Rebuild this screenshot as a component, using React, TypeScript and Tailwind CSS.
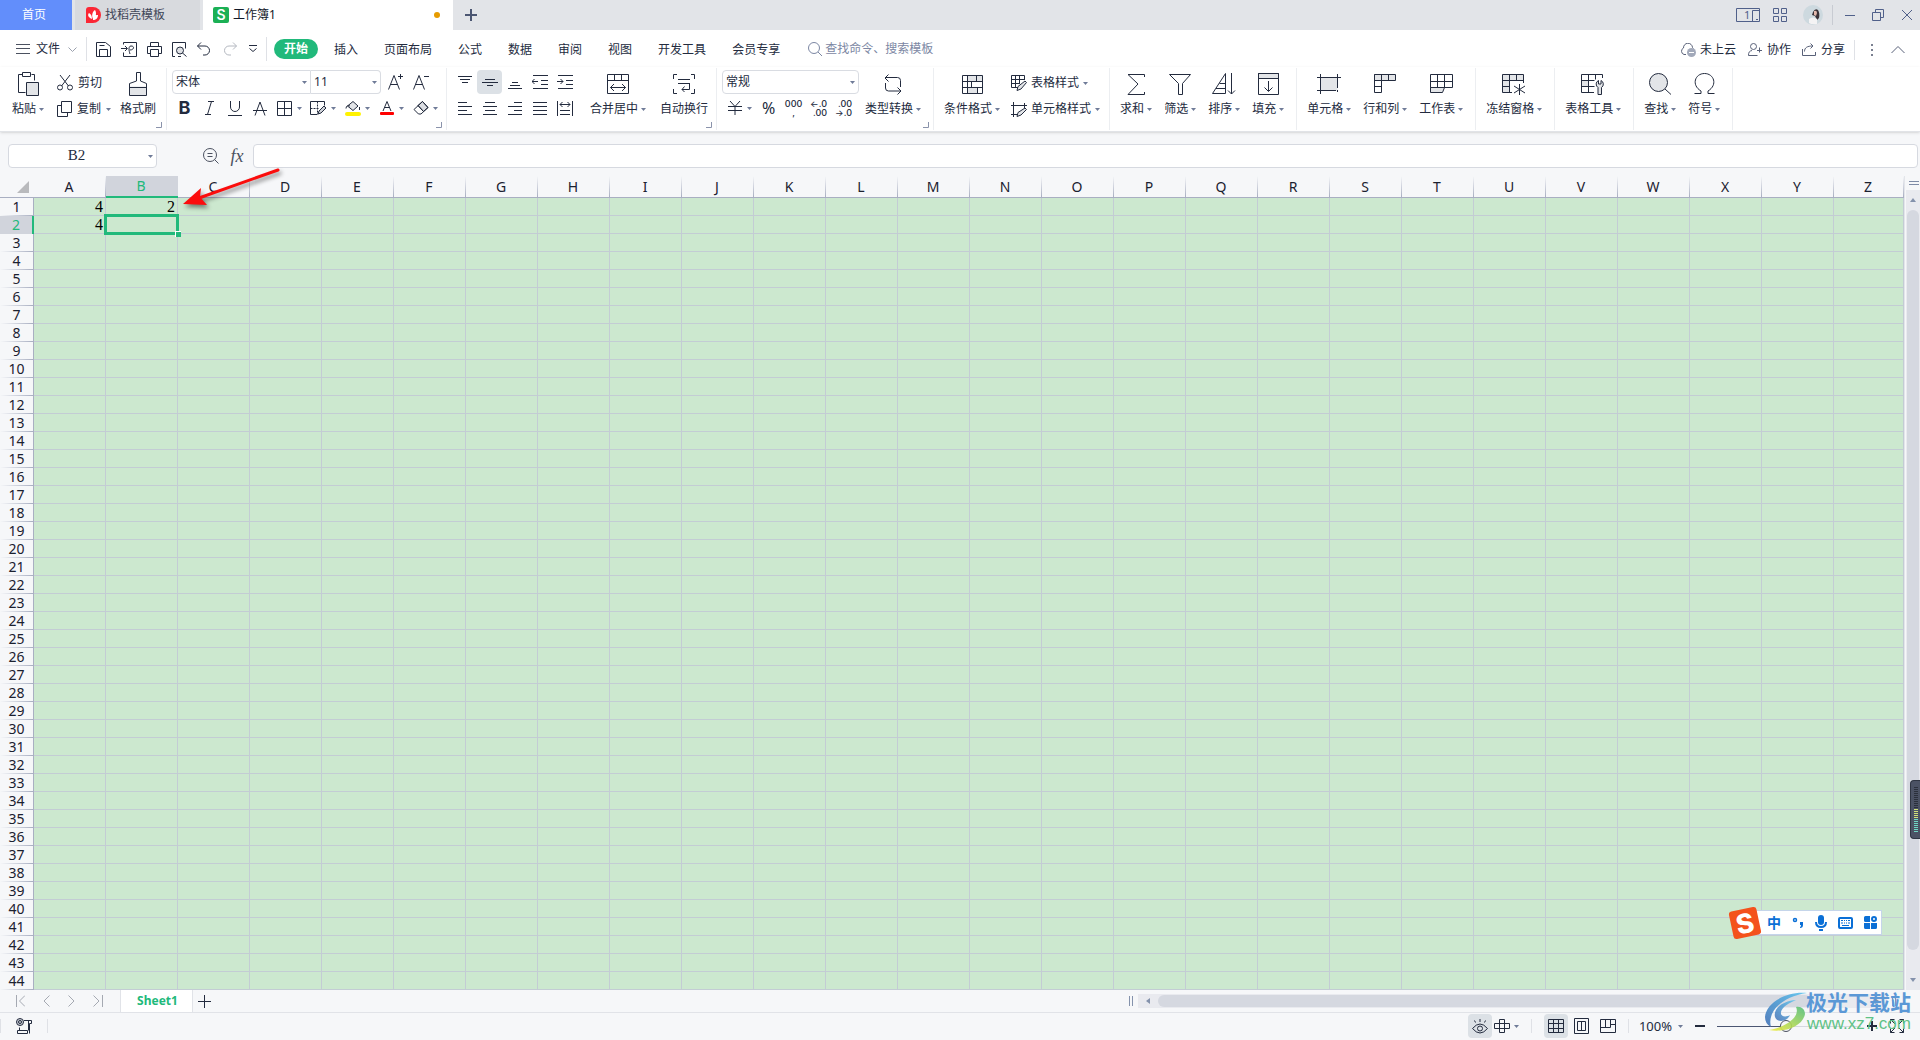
import type { ReactNode } from 'react'

const columns = 'ABCDEFGHIJKLMNOPQRSTUVWXYZ'.split('')
const rows = Array.from({ length: 44 }, (_, i) => i + 1)
const cells: Record<string, string> = { A1: '4', B1: '2', A2: '4' }
const menus = ['插入', '页面布局', '公式', '数据', '审阅', '视图', '开发工具', '会员专享']

function Svg({ w, h, children, className = '' }: { w: number; h: number; children: ReactNode; className?: string }) {
  return (
    <svg width={w} height={h} viewBox={`0 0 ${w} ${h}`} fill="none" stroke="currentColor" className={`shrink-0 ${className}`} aria-hidden="true">
      {children}
    </svg>
  )
}

function Caret() {
  return (
    <Svg w={5} h={3} className="text-[#6f7b98]">
      <path d="M0 0h5L2.500 3z" fill="currentColor" stroke="none" />
    </Svg>
  )
}

function Group({ children, launcher, className = 'gap-3 pl-[10px] pr-3' }: { children: ReactNode; launcher?: boolean; className?: string }) {
  return (
    <div className={`relative flex h-[62px] shrink-0 items-start border-r border-[#eceef1] pt-0.5 ${className}`}>
      {children}
      {launcher && (
        <button aria-label="更多设置" className="absolute right-1 bottom-0.5 text-[#8a93ab]">
          <Svg w={6} h={6}><path d="M5.500 0v5.500H0" /></Svg>
        </button>
      )}
    </div>
  )
}

function BigButton({ label, icon, caret = true }: { label: string; icon: ReactNode; caret?: boolean }) {
  return (
    <button className="flex shrink-0 flex-col items-center">
      <span className="flex h-7 items-center">{icon}</span>
      <span className="flex h-[22px] items-center gap-[3px]">
        {label}
        {caret && <Caret />}
      </span>
    </button>
  )
}

function Tool({ label, children, caret, active }: { label: string; children: ReactNode; caret?: boolean; active?: boolean }) {
  return (
    <button aria-label={label} title={label} className="flex h-6 items-center">
      <span className={`flex h-6 w-[25px] items-center justify-center rounded-sm ${active ? 'bg-[#dce1e6]' : ''}`}>{children}</span>
      {caret && <span className="w-[9px]"><Caret /></span>}
    </button>
  )
}

function Picker({ label, value, className }: { label: string; value: string; className: string }) {
  return (
    <span className={`relative flex h-6 items-center border border-[#d9dce2] bg-white ${className}`}>
      <select aria-label={label} className="h-full w-full appearance-none bg-transparent pl-[3px] outline-none">
        <option>{value}</option>
      </select>
      <span className="pointer-events-none absolute right-[3px]"><Caret /></span>
    </span>
  )
}

// Horizontal strokes for the alignment icons, each one as [x1, x2, y]
function Lines({ items, children }: { items: number[][]; children?: ReactNode }) {
  return (
    <Svg w={16} h={15}>
      {items.map(([a, b, y]) => <path key={`${a}-${y}`} d={`M${a} ${y + 0.5}H${b}`} />)}
      {children}
    </Svg>
  )
}

function TitleBar() {
  return (
    <header className="flex h-[30px] items-center bg-[#e2e4e8] text-[#3f4658]">
      <button className="h-full w-[72px] bg-[#628efb] pr-1 text-white">首页</button>
      <button className="ml-[3px] flex h-full w-[125px] items-center gap-1 bg-[#d8dade] pl-[11px]">
        <Svg w={15} h={16}>
          <path d="M0 3Q0 0 3 0h4a8 8 0 0 1 0 16H0z" fill="#fb2735" stroke="none" />
          <path d="M6 12C1 10 2 7 3 6c2 1 3 3 3 6zM7 12C5 8 7 4 9 3c2 3 1 7-2 9zM7 13c0-3 2-5 5-5 0 3-2 5-5 5z" fill="#fff" stroke="none" />
        </Svg>
        找稻壳模板
      </button>
      <button className="ml-[3px] flex h-full w-[250px] items-center gap-1 bg-white pl-[10px] text-[#111827]">
        <span className="flex size-4 items-center justify-center rounded-[2px] bg-[#1bb055] font-['Inter'] text-sm font-semibold text-white">S</span>
        工作簿1
        <span className="mr-[13px] ml-auto size-1.5 rounded-full bg-[#e69b00]" />
      </button>
      <button aria-label="新建标签" className="ml-3 text-[#4b5672]">
        <Svg w={12} h={12}><path d="M6 0v12M0 6h12" strokeWidth="2" /></Svg>
      </button>
      <div className="mr-2 ml-auto flex h-full items-center text-[#50608a]">
        <button aria-label="窗口布局" className="mr-[13px]">
          <Svg w={24} h={14}>
            <path d="M.5.5h23v13H.5zM16.500 13.500v-11h7M20 11.500h2" />
            <text x="8" y="11" fontSize="11" fill="currentColor" stroke="none">1</text>
          </Svg>
        </button>
        <button aria-label="应用" className="mr-4">
          <Svg w={14} h={14}><path d="M.5.5h5v5h-5zM8.500.5h5v5h-5zM.5 8.500h5v5h-5zM8.500 8.500h5v5h-5z" /></Svg>
        </button>
        <button aria-label="账户" className="mr-[9px]">
          <Svg w={20} h={20}>
            <circle cx="10" cy="10" r="10" fill="#cdd9df" stroke="none" />
            <path d="M10 7q2-4 5-2 2 3 1 8l-2 2-2-4-3-1z" fill="#3a3238" stroke="none" />
            <path d="M11 6q3-1 3 2l-1 3-2-1z" fill="#e3b9ad" stroke="none" />
            <path d="M6 14q4-3 8 0v5q-5 1-8-1z" fill="#f4f3f4" stroke="none" />
          </Svg>
        </button>
        <span className="mr-3 h-5 w-px bg-[#c8cbd2]" />
        <button aria-label="最小化" className="mr-[17px]"><Svg w={10} h={12}><path d="M0 6.500h10" /></Svg></button>
        <button aria-label="还原" className="mr-[18px]"><Svg w={12} h={12}><path d="M.5 3.500h8v8h-8zM3.500 3.500v-3h8v8h-3" /></Svg></button>
        <button aria-label="关闭"><Svg w={10} h={10}><path d="M0 0l10 10M10 0L0 10" /></Svg></button>
      </div>
    </header>
  )
}

function MenuBar() {
  return (
    <nav className="flex h-[37px] items-center pt-px">
      <button className="ml-4 flex items-center">
        <Svg w={14} h={10} className="mr-1.5 text-[#4b5160]"><path d="M0 .5h14M0 4.500h14M0 9.500h14" /></Svg>
        文件
        <Svg w={9} h={5} className="ml-2 text-[#9aa0ad]"><path d="M.5.5l4 4 4-4" /></Svg>
      </button>
      <span className="mr-[9px] ml-[9px] h-6 w-px bg-[#dfe1e6]" />
      <div className="flex items-center gap-2.5">
        <button aria-label="保存"><Svg w={15} h={15}><path d="M.5.5h9l5 4v10H.5zM3.500 14.500v-7h8v7M3.500 3.500h5" /></Svg></button>
        <button aria-label="输出为PDF"><Svg w={16} h={15}><path d="M2.500 2.500v-2h13v14h-13v-4M0 6.500h6M4 4l2.500 2.500L4 9M9 12c-1-3-2-8 1-8 4 0 3 4-1 4" /></Svg></button>
        <button aria-label="打印"><Svg w={15} h={15}><path d="M3.500 4.500v-4h8v4M3.500 11.500h-3v-7h14v7h-3M3.500 7.500h8v7h-8z" /></Svg></button>
        <button aria-label="打印预览"><Svg w={15} h={15}><path d="M3 14.500H.5V.5h13v6M6 14.500h3" /><circle cx="8" cy="8.500" r="3.500" fill="#dfe1e5" /><path d="M10.500 11l4 3.500" /></Svg></button>
        <button aria-label="撤销"><Svg w={14} h={14}><path d="M4 .5L.5 4 4 7.500M.5 4H8a4.500 4.500 0 0 1 0 9H6" /></Svg></button>
        <button aria-label="恢复" className="ml-0.5 text-[#b4b8c0]"><Svg w={14} h={14}><path d="M10 .5L13.500 4 10 7.500M13.500 4H6a4.500 4.500 0 0 0 0 9h2" /></Svg></button>
        <button aria-label="更多命令" className="ml-0.5"><Svg w={8} h={8}><path d="M0 .5h8M.5 3.500L4 6.500l3.500-3" /></Svg></button>
      </div>
      <span className="mr-[7px] ml-[9px] h-6 w-px bg-[#dfe1e6]" />
      <button className="h-5 w-11 rounded-full bg-[#21b97b] font-bold text-white">开始</button>
      <div className="ml-4 flex gap-[26px] pt-px">
        {menus.map((m) => <button key={m}>{m}</button>)}
      </div>
      <label className="ml-7 flex items-center gap-0.5 text-[#7c87a3]">
        <Svg w={15} h={15}><circle cx="6" cy="6" r="5.500" /><path d="M10 10l4 4" /></Svg>
        <input className="w-32 outline-none placeholder:text-[#7c87a3]" placeholder="查找命令、搜索模板" aria-label="查找命令" />
      </label>
      <div className="mr-[15px] ml-auto flex items-center pt-px">
        <button className="mr-3 flex items-center gap-1">
          <Svg w={16} h={14} className="text-[#596178]">
            <path d="M6 11.500H4a3.500 3.500 0 0 1-.5-6.500 4.500 4.500 0 0 1 9-.5l1 1" />
            <circle cx="11.500" cy="9.500" r="4.500" fill="#a2a9ba" stroke="none" />
            <path d="M9 9.500h5" stroke="#fff" />
          </Svg>
          未上云
        </button>
        <button className="mr-[11px] flex items-center gap-[5px]">
          <Svg w={14} h={13} className="text-[#596178]"><circle cx="5.500" cy="3.500" r="3" /><path d="M4 7.500C1.500 8 .5 9 .5 12.500h9M11.500 4.500v5M9 7.500h5" /></Svg>
          协作
        </button>
        <button className="flex items-center gap-[5px]">
          <Svg w={14} h={13} className="text-[#596178]"><path d="M.5 6v6.500h13V9M2.500 8.500c0-4 3-5.500 8-5.500M8.500.5L11 3 8.500 5.500" /></Svg>
          分享
        </button>
        <span className="mr-4 ml-[9px] h-5 w-px bg-[#dfe1e6]" />
        <button aria-label="更多"><Svg w={2} h={12} className="text-[#7a8090]"><path d="M1 0v2M1 5v2M1 10v2" strokeWidth="2" /></Svg></button>
        <button aria-label="收起功能区" className="ml-[18px] text-[#596178]"><Svg w={14} h={8}><path d="M.5 7L7 .5 13.500 7" /></Svg></button>
      </div>
    </nav>
  )
}

const smallText = "font-['Inter'] text-[9px] leading-[9px] font-medium"

function Ribbon() {
  return (
    <section aria-label="开始" className="flex h-[65px] items-start border-b border-[#e1e3e7] pt-px shadow-sm">
      <Group launcher className="pr-[10px] pl-3">
        <BigButton label="粘贴" icon={<Svg w={22} h={24}><path d="M5.500 2.500h-4v18h7M14.500 2.500h3v6M5.500.5h8v4h-8z" /><path d="M9.500 10.500h12v13h-12z" fill="#e3e5e8" /></Svg>} />
        <div className="mr-[7px] ml-[13px] flex w-14 flex-col gap-0.5 pt-px">
          <button className="flex h-6 items-center gap-[5px]">
            <Svg w={16} h={16}><path d="M3 0l8.500 11M13 0L4.500 11" /><circle cx="3" cy="12.500" r="2.500" /><circle cx="13" cy="12.500" r="2.500" /></Svg>
            剪切
          </button>
          <button className="flex h-6 items-center gap-[5px]">
            <Svg w={15} h={16}><path d="M4.500.5h10v11h-10zM4.500 4.500h-4v11h10v-4" /></Svg>
            <span className="shrink-0">复制</span>
            <Caret />
          </button>
        </div>
        <BigButton label="格式刷" caret={false} icon={<Svg w={18} h={24}><path d="M.5 14.500h17v9H.5z" fill="#e3e5e8" stroke="none" /><path d="M7.500 9V.5h4V9l6 2.500v12H.5v-12zM.5 15.500h17" /></Svg>} />
      </Group>

      <Group launcher className="w-[280px] pl-[5px]">
        <div className="flex flex-col gap-0.5">
          <div className="flex">
            <Picker label="字体" value="宋体" className="w-[139px] rounded-l-sm" />
            <Picker label="字号" value="11" className="mr-0.5 w-[70px] rounded-r-sm border-l-0" />
            <Tool label="增大字号"><Svg w={15} h={16}><path d="M.5 15.500L6 1.500l5.500 14M2.500 10.500h7M10 2.500h5M12.500 0v5" /></Svg></Tool>
            <Tool label="减小字号"><Svg w={16} h={16}><path d="M.5 15.500L6 1.500l5.500 14M2.500 10.500h7M11 2.500h5" /></Svg></Tool>
          </div>
          <div className="flex">
            <Tool label="加粗"><span className="font-['Inter'] text-lg font-bold">B</span></Tool>
            <Tool label="倾斜"><Svg w={9} h={14}><path d="M3 .5h6M0 13.500h6M6.500.5l-4 13" /></Svg></Tool>
            <Tool label="下划线"><Svg w={14} h={15}><path d="M2.500 0v6a4.500 4.500 0 0 0 9 0V0M0 14.500h14" /></Svg></Tool>
            <Tool label="删除线"><Svg w={14} h={15}><path d="M2 14.500L7 1l5 13.500M0 9.500h14" /></Svg></Tool>
            <Tool label="边框" caret><Svg w={15} h={15}><path d="M.5.5h14v14H.5zM7.500.5v14M.5 7.500h14" /></Svg></Tool>
            <Tool label="绘制边框" caret><Svg w={17} h={15}><path d="M7 13.500H.5V.5h14v4" /><path d="M.5 7.500h9M7.500.5v13" strokeDasharray="2 1" /><path d="M8 13l1-3 5-5 2 2-5 5z" fill="#cfd2d8" /></Svg></Tool>
            <Tool label="填充颜色" caret><Svg w={16} h={15}><path d="M2.500 5L8 .5l5 4.500L8 9.500z" fill="#e3e5e8" /><path d="M1 7.500C1 5 3 4 5 5M14.500 6v3" /><rect y="11" width="16" height="4" rx="2" fill="#fff200" stroke="none" /></Svg></Tool>
            <Tool label="字体颜色" caret><Svg w={14} h={15}><path d="M3 10L7 .5 11 10M4.500 6.500h5" /><rect y="11" width="14" height="3" rx="1" fill="#f00" stroke="none" /></Svg></Tool>
            <Tool label="清除" caret><Svg w={16} h={14}><path d="M5 4.500L9.500.5l5.500 6-4.500 4z" fill="#dcdee3" /><path d="M9.500.5l5.500 6-7 6.500H5.500L1 8.500zM5 4.500l5.500 6" /></Svg></Tool>
          </div>
        </div>
      </Group>

      <Group launcher className="pr-2 pl-[5px]">
        <div className="grid grid-cols-[repeat(5,25px)] gap-y-0.5">
          <Tool label="顶端对齐"><Lines items={[[1, 15, 1], [3, 13, 4], [5, 11, 7]]} /></Tool>
          <Tool label="垂直居中" active><Lines items={[[3, 13, 4], [0, 16, 7], [5, 11, 10]]} /></Tool>
          <Tool label="底端对齐"><Lines items={[[5, 11, 7], [3, 13, 10], [1, 15, 13]]} /></Tool>
          <Tool label="减少缩进"><Lines items={[[1, 16, 0], [9, 16, 5], [9, 16, 9], [1, 16, 13]]}><path d="M0 6.500h6M2.500 4L0 6.500 2.500 9" /></Lines></Tool>
          <Tool label="增加缩进"><Lines items={[[1, 16, 0], [9, 16, 5], [9, 16, 9], [1, 16, 13]]}><path d="M0 6.500h6M3.500 4L6 6.500 3.500 9" /></Lines></Tool>
          <Tool label="左对齐"><Lines items={[[1, 10, 1], [1, 15, 5], [1, 10, 9], [1, 15, 13]]} /></Tool>
          <Tool label="水平居中"><Lines items={[[3, 13, 1], [1, 15, 5], [3, 13, 9], [1, 15, 13]]} /></Tool>
          <Tool label="右对齐"><Lines items={[[7, 15, 1], [1, 15, 5], [7, 15, 9], [1, 15, 13]]} /></Tool>
          <Tool label="两端对齐"><Lines items={[[1, 15, 1], [1, 15, 5], [1, 15, 9], [1, 15, 13]]} /></Tool>
          <Tool label="分散对齐"><Lines items={[[3, 13, 9], [3, 13, 13]]}><path d="M.5 0v15M15.500 0v15M3 3.500h10M5.500 1L3 3.500 5.500 6M10.500 1L13 3.500 10.500 6" /></Lines></Tool>
        </div>
        <div className="ml-[13px] flex gap-3.5">
          <BigButton label="合并居中" icon={<Svg w={22} h={20}><path d="M.5.5h21v19H.5zM.5 6.500h21M7.500.5v6M14.500.5v6M3.500 13.500h15M7 10l-3.500 3.500L7 17M15 10l3.500 3.500L15 17" /></Svg>} />
          <BigButton label="自动换行" caret={false} icon={<Svg w={22} h={20}><path d="M4 .5H.5V5M18 .5h3.500V5M4 19.500H.5V15M18 19.500h3.500V15M5 5.500h12M5 9.500h12M16.500 9.500v6H9M11.500 12.500L9 15.500l2.500 2.500" /></Svg>} />
        </div>
      </Group>

      <Group launcher className="pr-3 pl-[5px]">
        <div className="mr-1.5 flex w-[137px] flex-col gap-0.5">
          <Picker label="数字格式" value="常规" className="rounded-sm" />
          <div className="flex">
            <Tool label="货币" caret><Svg w={14} h={14}><path d="M2 0l5 5.500L12 0M0 5.500h14M0 9.500h14M7 5.500V14" /></Svg></Tool>
            <Tool label="百分比"><span className="text-base">%</span></Tool>
            <Tool label="千位分隔"><span className={`${smallText} text-center`}>000<br />,</span></Tool>
            <Tool label="增加小数"><span className={`${smallText} text-right`}>←.0<br />.00</span></Tool>
            <Tool label="减少小数"><span className={`${smallText} text-right`}>.00<br />→.0</span></Tool>
          </div>
        </div>
        <BigButton label="类型转换" icon={<Svg w={18} h={21}><path d="M4.500.5L1 4l3.500 3.500M1 3.500h12.500q3 0 3 3V13M1.500 9v5q0 3 3 3H17M13.500 13.500L17 17l-3.500 3.500" /></Svg>} />
      </Group>

      <Group className="pr-[9px] pl-[10px]">
        <BigButton label="条件格式" icon={<Svg w={21} h={19}><path d="M6 1h14v5H6zM6 12h9v6H6z" fill="#e3e5e8" stroke="none" /><path d="M.5.5h20v18H.5zM.5 6.500h20M.5 12.500h20M5.500.5v18M14.500.5v6M9.500 6.500v6M15.500 12.500v6" /></Svg>} />
        <div className="ml-[11px] flex flex-col gap-0.5 pt-px">
          <button className="flex h-6 items-center">
            <Svg w={16} h={17} className="mr-1"><path d="M7 12.500H.5V.5h13V5M.5 4.500h13M.5 8.500H9M4.500.5v12M8.500.5V9" /><path d="M6 15.500l1-4 7-5.500 1.500 1.500L10 14z" fill="#e3e5e8" /></Svg>
            表格样式<span className="ml-1"><Caret /></span>
          </button>
          <button className="flex h-6 items-center">
            <Svg w={16} h={15} className="mr-1"><path d="M0 3.500h16M2.500 0v15M0 12.500h6M13.500 1v5" /><path d="M6 14.500l1-4 7-4.500 1.500 1.500L10 13z" fill="#e3e5e8" /></Svg>
            单元格样式<span className="ml-1"><Caret /></span>
          </button>
        </div>
      </Group>

      <Group>
        <BigButton label="求和" icon={<Svg w={18} h={21}><path d="M17.500 3V.5H1l10 9.500L1 20.500h16.500V18" /></Svg>} />
        <BigButton label="筛选" icon={<Svg w={22} h={21}><path d="M.5.5h21l-8 9v11h-4v-11z" /></Svg>} />
        <BigButton label="排序" icon={<Svg w={24} h={22}><path d="M.5 20.500l13-20v20zM4 15.500h9.500M7.500 10.500h6M19.500 0v21M16 17.500l3.500 3.500 3.500-3.500" /></Svg>} />
        <BigButton label="填充" icon={<Svg w={21} h={22}><path d="M.5.5h20v5H.5z" fill="#e3e5e8" /><path d="M.5.5h20v21H.5zM10.500 8v10M6.500 14.500l4 4 4-4" /></Svg>} />
      </Group>

      <Group>
        <BigButton label="单元格" icon={<Svg w={24} h={20}><path d="M3.500 3.500h17v13h-17z" fill="#e3e5e8" stroke="none" /><path d="M0 3.500h24M0 16.500h19M3.500 0v20M20.500 0v14M20.500 16v2" /></Svg>} />
        <BigButton label="行和列" icon={<Svg w={22} h={20}><path d="M.5.500h21v6H.5z" fill="#e3e5e8" /><path d="M7.500.5v18h-7V.5M14.500.5v6M.5 12.500h7" /></Svg>} />
        <BigButton label="工作表" icon={<Svg w={23} h={20}><path d="M.5 13.500h14l-2 5H.5z" fill="#e3e5e8" /><path d="M.5.5h22v13H.5zM.5 7.500h22M7.500.5v13M14.500.5v13" /></Svg>} />
      </Group>

      <Group>
        <BigButton label="冻结窗格" icon={<Svg w={24} h={21}><path d="M.5.5h21v6h-14v12h-7z" fill="#e3e5e8" stroke="none" /><path d="M10 18.500H.5V.5h21V9M.5 6.500h21M.5 12.500h7M7.500.5v18M14.500.5v6M17.500 10v11M12 12l11 7M23 12l-11 7" /></Svg>} />
      </Group>

      <Group>
        <BigButton label="表格工具" icon={<Svg w={24} h={21}><path d="M.5 6.500h7v6h-7z" fill="#e3e5e8" stroke="none" /><path d="M13 18.500H.5V.5h21V4M.5 6.500h13M.5 12.500h13M7.500.5v18M14.500.5v5" /><path d="M17.500 6.500a4 4 0 0 0-.5 7v7h3.500v-7a4 4 0 0 0-.5-7V10h-2.500z" fill="#e3e5e8" /></Svg>} />
      </Group>

      <Group>
        <BigButton label="查找" icon={<Svg w={23} h={22}><circle cx="9.500" cy="9.500" r="9" fill="#e3e5e8" /><path d="M16 16l6 5.500" /></Svg>} />
        <BigButton label="符号" icon={<Svg w={21} h={22}><path d="M.5 20.500H7V18C-3 12 1 .5 10.500.5S24 12 14 18v2.500h6.500" /></Svg>} />
      </Group>
    </section>
  )
}

function FormulaBar() {
  return (
    <div className="flex h-11 items-center pl-2 pr-0.5 pt-1">
      <div className="relative flex h-6 w-[149px] items-center rounded-sm border border-[#d6d9e0] bg-white">
        <input aria-label="名称框" defaultValue="B2" className="w-full pr-3 text-center font-['Liberation_Serif'] text-[15px] outline-none" />
        <button aria-label="选择名称" className="absolute right-[3px]"><Caret /></button>
      </div>
      <button aria-label="浏览公式结果" className="ml-[46px] text-[#4b5160]">
        <Svg w={16} h={16}><circle cx="7" cy="7" r="6.500" /><path d="M11.500 11.500l4 4M4.500 5.500h5M4.500 8.500h5" /></Svg>
      </button>
      <button aria-label="插入函数" className="ml-2.5 w-4 font-['Liberation_Serif'] text-lg leading-none text-[#4b5160] italic">fx</button>
      <input aria-label="编辑栏" className="ml-2 h-6 min-w-0 flex-1 rounded-sm border border-[#d6d9e0] bg-white px-1 outline-none" />
    </div>
  )
}

function Sheet() {
  return (
    <table className="w-full table-fixed border-separate border-spacing-0 bg-[#cce8cf] font-['Noto_Sans'] text-sm text-[#1b2130]">
      <thead>
        <tr className="h-[22px] bg-[#f6f7f9]">
          <th className="w-[34px] border-b border-[#a9afc2] p-0 align-bottom">
            <Svg w={12} h={12} className="mb-1 ml-[17px]"><path d="M12 0v12H0z" fill="#b9babd" stroke="none" /></Svg>
          </th>
          {columns.map((c) => (
            <th
              key={c}
              scope="col"
              className={`p-0 pr-0.5 leading-5 font-normal ${c === 'Z' ? '' : 'w-[72px]'} ${
                c === 'B'
                  ? 'border-b-2 border-[#21b97b] bg-[#d1d4dc] text-[#21b97b]'
                  : 'border-b border-[#a9afc2] bg-[linear-gradient(to_bottom,#f6f7f9,#a9afc2)] bg-[length:1px_100%] bg-right bg-no-repeat'
              }`}
            >
              {c}
            </th>
          ))}
        </tr>
      </thead>
      <tbody>
        {rows.map((r) => (
          <tr key={r} className="h-[18px]">
            <th
              scope="row"
              className={`p-0 pb-px text-center leading-4 font-normal ${
                r === 2
                  ? 'border-r-2 border-[#21b97b] bg-[#d1d4dc] text-[#21b97b]'
                  : 'border-r border-[#a9afc2] bg-[#f6f7f9] bg-[linear-gradient(to_right,#f6f7f9,#a9afc2)] bg-[length:100%_1px] bg-bottom bg-no-repeat'
              }`}
            >
              {r}
            </th>
            {columns.map((c) => (
              <td
                key={c}
                className={`border-r border-b border-[#c3ccd4] p-0 pr-0.5 text-right font-['Liberation_Serif'] text-base leading-[17px] text-black ${c === 'B' && r === 2 ? 'relative' : ''}`}
              >
                {cells[c + r]}
                {c === 'B' && r === 2 && (
                  <span className="absolute -inset-0.5 border-3 border-[#21b97b]">
                    <span className="absolute -right-[5px] -bottom-[5px] size-1.5 border-t border-l border-white bg-[#21b97b]" />
                  </span>
                )}
              </td>
            ))}
          </tr>
        ))}
      </tbody>
    </table>
  )
}

function VerticalScroll() {
  return (
    <div className="flex w-4 flex-col border-l border-[#e3e5ea] pl-px">
      <Svg w={10} h={4} className="mt-[5px] mb-[5px] ml-[3px] text-[#7e8ba6]"><path d="M0 .5h10M0 3.500h10" /></Svg>
      <div className="flex flex-1 flex-col items-center bg-[#e9eaef] text-[#8492ac]">
        <button aria-label="向上滚动" className="my-2"><Svg w={6} h={4}><path d="M0 4h6L3 0z" fill="currentColor" stroke="none" /></Svg></button>
        <div className="w-3 flex-1 rounded-full bg-[#d5d8e0]" />
        <button aria-label="向下滚动" className="mt-7 mb-2"><Svg w={6} h={4}><path d="M0 0h6L3 4z" fill="currentColor" stroke="none" /></Svg></button>
      </div>
    </div>
  )
}

function SheetTabs() {
  return (
    <div className="flex h-[23px] items-center border-b border-[#e1e3e8]">
      <div className="flex items-center gap-[18px] pl-4 text-[#a5a9b2]">
        <button aria-label="第一个"><Svg w={9} h={12}><path d="M.5 0v12M9 .5L3.500 6 9 11.500" /></Svg></button>
        <button aria-label="上一个"><Svg w={7} h={12}><path d="M6.500.5L1 6l5.500 5.500" /></Svg></button>
        <button aria-label="下一个"><Svg w={7} h={12}><path d="M.5.5L6 6 .5 11.500" /></Svg></button>
        <button aria-label="最后一个"><Svg w={10} h={12}><path d="M9.500 0v12M.5.5L6 6 .5 11.500" /></Svg></button>
      </div>
      <button className="ml-[17px] h-full w-[73px] border-x border-[#e1e3e8] bg-white pl-0.5 font-['Noto_Sans'] text-xs font-bold text-[#21b97b]">Sheet1</button>
      <button aria-label="新建工作表" className="ml-[5px]"><Svg w={13} h={13}><path d="M6.500 0v13M0 6.500h13" /></Svg></button>
      <div className="ml-auto flex h-3.5 w-7/17 items-center text-[#8492ac]">
        <Svg w={4} h={10} className="mr-[5px]"><path d="M.5 0v10M3.500 0v10" /></Svg>
        <div className="mr-[5px] flex h-full flex-1 items-center bg-[#e9eaef]">
          <button aria-label="向左滚动" className="mx-2"><Svg w={4} h={6}><path d="M4 0v6L0 3z" fill="currentColor" stroke="none" /></Svg></button>
          <div className="h-3 flex-1 rounded-full bg-[#d5d8e0]" />
          <button aria-label="向右滚动" className="mr-2 ml-16"><Svg w={4} h={6}><path d="M0 0v6l4-3z" fill="currentColor" stroke="none" /></Svg></button>
        </div>
        <Svg w={4} h={10} className="mr-6"><path d="M.5 0v10M3.500 0v10" /></Svg>
      </div>
    </div>
  )
}

function StatusBar() {
  return (
    <footer className="flex h-[26px] items-center">
      <span className="h-3.5 w-px bg-[#dfe1e6]" />
      <button aria-label="宏" className="mr-[15px] ml-[15px]">
        <Svg w={16} h={16}><circle cx="4" cy="4" r="3.500" fill="#c8ccd4" /><circle cx="4" cy="4" r="1.500" /><path d="M8 2.500h7.500v3h-2v10M1.500 12.500h10v3h-10zM3.500 9.500v3M12.500 2.500v10" /></Svg>
      </button>
      <span className="h-3.5 w-px bg-[#dfe1e6]" />
      <div className="mr-4 ml-auto flex items-center">
        <button aria-label="护眼模式" className="flex size-6 items-center justify-center rounded-sm bg-[#dce1e6]">
          <Svg w={16} h={15}><path d="M.5 9.500q7.500-9 15 0-7.500 9-15 0zM8 0v3M2.500 1.500l1 2M13.500 1.500l-1 2" /><circle cx="8" cy="9.500" r="2.500" /></Svg>
        </button>
        <button aria-label="阅读模式" className="ml-0.5 flex items-center gap-1">
          <Svg w={16} h={14}><path d="M5.500.5h5v13h-5zM.5 4.500h15v5H.5z" /></Svg>
          <Caret />
        </button>
        <span className="mx-3 h-3.5 w-px bg-[#dfe1e6]" />
        <button aria-label="普通视图" className="flex size-6 items-center justify-center rounded-sm bg-[#dce1e6]">
          <Svg w={16} h={14}><path d="M.5.5h15v13H.5zM.5 4.500h15M.5 9.500h15M5.500.5v13M10.500.5v13" /></Svg>
        </button>
        <button aria-label="页面布局" className="ml-1.5"><Svg w={15} h={16}><path d="M.5.5h14v15H.5zM3.500 3.500h8v9h-8zM7.500 3.500v9" /></Svg></button>
        <button aria-label="分页预览" className="ml-[11px]"><Svg w={16} h={14}><path d="M.5.5h15v13H.5zM5.500.5v8M10.500.5v8M.5 8.500h10M10.500 5.500h5" /></Svg></button>
        <span className="mr-2.5 ml-3 h-3.5 w-px bg-[#dfe1e6]" />
        <button className="flex items-center gap-1.5 font-['Noto_Sans'] text-[13px] leading-4">100%<Caret /></button>
        <button aria-label="缩小" className="ml-3"><Svg w={10} h={10}><path d="M0 5h10" strokeWidth="2" /></Svg></button>
        <input
          type="range"
          aria-label="缩放"
          min={0}
          max={100}
          defaultValue={48}
          className="ml-3 h-3 w-36 appearance-none bg-[linear-gradient(to_right,#4b5672_48%,#d5d8e0_48%)] bg-[length:100%_1px] bg-center bg-no-repeat [&::-webkit-slider-thumb]:size-3 [&::-webkit-slider-thumb]:appearance-none [&::-webkit-slider-thumb]:rounded-full [&::-webkit-slider-thumb]:border [&::-webkit-slider-thumb]:border-[#4b5160] [&::-webkit-slider-thumb]:bg-[#f6f7f9]"
        />
        <button aria-label="放大" className="ml-1.5"><Svg w={10} h={10}><path d="M0 5h10M5 0v10" strokeWidth="2" /></Svg></button>
        <button aria-label="全屏" className="ml-[13px]">
          <Svg w={14} h={14}><path d="M.5 4.500v-4h4M9.500.5h4v4M13.500 9.500v4h-4M4.500 13.500h-4v-4M.5.500l4.500 4.500M13.500.5L9 5M13.500 13.500L9 9M.5 13.500L5 9" /></Svg>
        </button>
      </div>
    </footer>
  )
}

function InputMethodBar() {
  return (
    <div className="absolute right-[38px] bottom-[55px] flex h-[25px] items-center gap-[11px] border border-[#c5d5ea] bg-white pr-1 pl-2.5 text-[#0a6fd6]">
      <span className="absolute -left-[26px] flex size-7 -rotate-12 items-center justify-center rounded-[3px] bg-[#f4521c] font-['Inter'] text-[27px] leading-none font-extrabold text-white">S</span>
      <span className="text-sm leading-none font-bold">中</span>
      <Svg w={12} h={12}><circle cx="3" cy="3" r="1.500" strokeWidth="1.500" /><path d="M8 5h3v3q0 3-3 3v-1q1 0 1-2H8z" fill="currentColor" stroke="none" /></Svg>
      <Svg w={12} h={16}><rect x="3" width="6" height="10" rx="3" fill="currentColor" stroke="none" /><path d="M1 7q0 5 5 5t5-5M6 12v1M4 15h4" strokeWidth="2" /></Svg>
      <Svg w={15} h={12}><rect x="1" y="1" width="13" height="10" rx="1" strokeWidth="2" /><path d="M3 3.500h2M6 3.500h1M8 3.500h1M10 3.500h2M3 6h2M6 6h1M8 6h1M10 6h2M4 8.500h7" /></Svg>
      <Svg w={13} h={13}><path d="M0 1.500Q0 0 1.500 0H6v6H1.500Q0 6 0 4.500zM0 7h6v6H1.500Q0 13 0 11.500zM7 7h6v4.500q0 1.500-1.500 1.500H7z" fill="currentColor" stroke="none" /><circle cx="10" cy="3" r="2" strokeWidth="2" /></Svg>
    </div>
  )
}

function Watermark() {
  return (
    <div className="pointer-events-none absolute right-[9px] bottom-1.5 flex items-center">
      <svg width="44" height="42" viewBox="0 0 44 42" className="-mr-0.5" aria-hidden="true">
        <defs>
          <linearGradient id="swirlBlue" x1="0" y1="1" x2="1" y2="0">
            <stop offset="0" stopColor="#3f6fb5" />
            <stop offset="1" stopColor="#5cc4ef" />
          </linearGradient>
          <linearGradient id="swirlGreen" x1="0" y1="1" x2="1" y2="0">
            <stop offset="0" stopColor="#f2ec3a" />
            <stop offset="1" stopColor="#53bd7d" />
          </linearGradient>
        </defs>
        <path d="M43 2C22 0 2 12 1 26q0 7 6 10C3 22 16 6 43 2z" fill="url(#swirlBlue)" opacity=".9" />
        <path d="M32 9C18 10 9 18 11 26c2 6 12 5 15-2-5 3-10 1-9-3 1-5 8-9 15-12z" fill="url(#swirlBlue)" opacity=".85" />
        <path d="M5 39c16 3 34-4 36-16 0-5-4-8-9-7 4 8-6 19-27 23z" fill="url(#swirlGreen)" opacity=".9" />
      </svg>
      <div className="flex flex-col items-end">
        <span className="text-[21px] leading-6 font-bold text-[#5b98d6]">极光下载站</span>
        <span className="font-['Liberation_Sans'] text-[17px] leading-5 text-[#5fc286]">www.xz7.com</span>
      </div>
    </div>
  )
}

export default function App() {
  return (
    <div className="relative flex min-h-screen flex-col overflow-hidden bg-[#f6f7f9] font-['Noto_Sans','Noto_Sans_CJK_SC',sans-serif] text-xs whitespace-nowrap text-[#232b3e]">
      <TitleBar />
      <div className="bg-white">
        <MenuBar />
        <Ribbon />
      </div>
      <FormulaBar />
      <main className="relative flex">
        <div className="min-w-0 flex-1">
          <Sheet />
        </div>
        <VerticalScroll />
        <InputMethodBar />
        <svg width="104" height="48" viewBox="0 0 104 48" className="pointer-events-none absolute -top-2 left-[181px] drop-shadow-[2px_3px_2px_rgba(0,0,0,0.45)]" aria-hidden="true">
          <path d="M97 2L18 30" stroke="#fb0d0d" strokeWidth="3" strokeLinecap="round" />
          <path d="M2 36L20 20l-1 9 7 8z" fill="#fb0d0d" />
        </svg>
        <div className="absolute right-0 bottom-[151px] flex h-[59px] w-2.5 flex-col justify-center rounded-l-sm border border-r-0 border-[#2f3542] bg-[#4b5264] pl-[3px]">
          <span className="h-[22px] w-1 bg-[repeating-linear-gradient(#2b303c_0_1px,#4b5264_1px_2px)]" />
          <span className="h-2.5 w-1 bg-[repeating-linear-gradient(#cfe07a_0_1px,#4b5264_1px_2px)]" />
          <span className="h-3.5 w-1 bg-[repeating-linear-gradient(#6fd6c4_0_1px,#4b5264_1px_2px)]" />
        </div>
      </main>
      <SheetTabs />
      <StatusBar />
      <Watermark />
    </div>
  )
}
